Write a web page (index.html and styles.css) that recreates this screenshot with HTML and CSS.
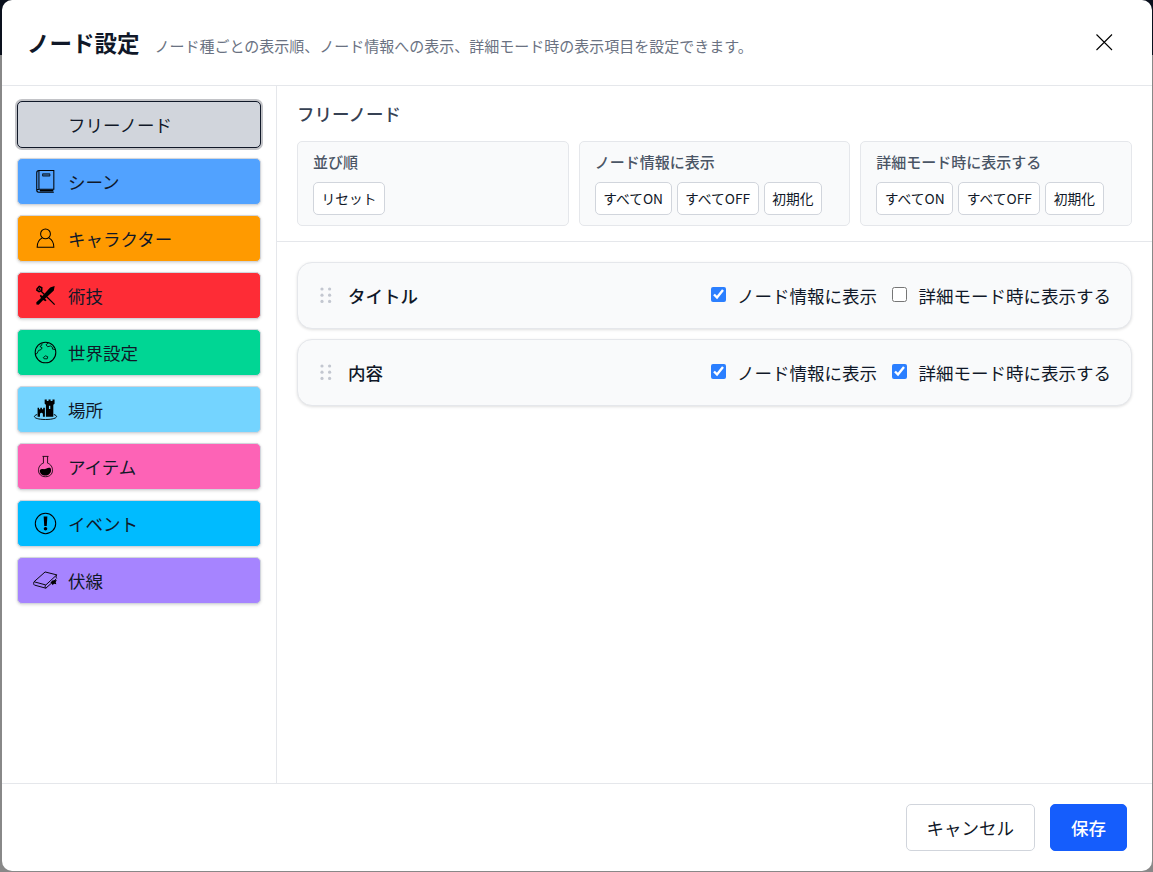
FILE: index.html
```html
<!DOCTYPE html>
<html lang="ja">

<head>
    <meta charset="UTF-8" />
    <meta name="viewport" content="width=device-width, initial-scale=1.0" />
    <title>ノード設定</title>
    <link rel="stylesheet" href="styles.css">
</head>

<body>
    <div class="modal">
        <header class="modal-header">
            <h2>ノード設定</h2>
            <p>ノード種ごとの表示順、ノード情報への表示、詳細モード時の表示項目を設定できます。</p>
            <button type="button" class="close" aria-label="閉じる">
                <svg width="18" height="18" viewBox="0 0 18 18"><path d="M1.5 1.5 17 17M17 1.5 1.5 17" /></svg>
            </button>
        </header>

        <div class="modal-body">
            <nav class="sidebar">
                <button type="button" class="node free active"><span class="icon"></span>フリーノード</button>
                <button type="button" class="node scene">
                    <svg class="icon" viewBox="0 0 24 24">
                        <path d="M5.7 1.5H20V19.5H5.7zM5.7 1.5C4.3 1.5 3.6 2.2 3.6 3.6V20.5C3.6 21.9 4.3 22.4 5.7 22.4H20M4 20C4.5 19.5 5 19.5 5.7 19.5" />
                        <path d="M9.2 4.6h7v2.2h-7z" stroke-width=".7" fill="#0006" />
                        <path d="M6.5 20.8H19.5" stroke-width="1.7" />
                    </svg>シーン
                </button>
                <button type="button" class="node character">
                    <svg class="icon" viewBox="0 0 24 24">
                        <circle cx="12" cy="7.6" r="4.7" />
                        <path d="M8.9 11.4C6 12.8 4 15.6 4 20.4H20C20 15.6 18 12.8 15.1 11.4" />
                    </svg>キャラクター
                </button>
                <button type="button" class="node skill">
                    <svg class="icon" viewBox="0 0 24 24">
                        <path class="solid" d="M20.8 2.8 20 7.2 11.5 15.2 13 16.6 11.9 17.5 9.8 16.2 5.4 20.9 3.3 20.7 3.2 18.5 7.7 14.3 6.5 12.3 7.4 11.2 9 12.5 16.5 4.4z" />
                        <path d="M7.6 7.7 20.8 20.8" stroke-width="1.2" />
                        <path d="M4 5.5 6 3.4 8.4 4.5 8.3 7.1 5.8 8.3 3.7 6.8z" stroke-width="1.5" />
                        <path d="M5.5 5.4 7 6.4" stroke-width="1.5" />
                    </svg>術技
                </button>
                <button type="button" class="node world">
                    <svg class="icon" viewBox="0 0 24 24">
                        <circle cx="12" cy="12" r="9.9" />
                        <path d="M14.9 2.7 12.5 4.5 14 6.5 16.8 5.7 19 7.3 18.5 8.6 21.2 9.2M8.7 3.2 8.3 5.2 6.6 6.2 8.8 7.5 7.6 9.3 5.4 10 3.7 13.2 2.3 13M9.8 17 12 15.2 14.2 16.1 13.6 18.1 10.7 18z" stroke-width=".8" />
                    </svg>世界設定
                </button>
                <button type="button" class="node place">
                    <svg class="icon" viewBox="0 0 24 24">
                        <path class="solid" fill-rule="evenodd" d="M11.2 2.4h2v1.4h1.7V2.4h2v1.4h1.8V2.4h2v4.1l-1.2 1V19h-7.1V7.5l-1.2-1zM15.3 8.5v3h1.3v-3zM4.4 10.3h1.4v1.4H7v-1.4h1.6v1.4h1.2v-1.4h1.6V19H9.5v-3q-1.5-2-2.8 0v3H4.4z" />
                        <path d="M4 16.8C-1.5 18.5 1.8 21.6 12 21.6S25.5 18.5 20 16.8" stroke-width=".9" />
                    </svg>場所
                </button>
                <button type="button" class="node item">
                    <svg class="icon" viewBox="0 0 24 24">
                        <path d="M9.1 2.3H14.9M10 2.4V8.8C3.5 10.8 3.2 21.8 12 21.8S20.5 10.8 14 8.8V2.4" stroke-width=".8" />
                        <path class="solid" d="M6.5 15.5C8.4 13.7 9.6 14.8 11.4 14.5 13.7 14.1 14.4 12.5 17.1 13.8 18.4 17.2 15.5 20.6 12 20.6S6.5 18.7 6.5 15.5z" />
                    </svg>アイテム
                </button>
                <button type="button" class="node event">
                    <svg class="icon" viewBox="0 0 24 24">
                        <circle cx="12" cy="12" r="9.8" />
                        <path class="solid" d="M10.2 5.2h3.6l-.6 9.2h-2.4z" />
                        <circle class="solid" cx="12" cy="17.1" r="1.7" />
                    </svg>イベント
                </button>
                <button type="button" class="node foreshadow">
                    <svg class="icon" viewBox="0 0 24 24">
                        <path d="M1 13.2 11.6 3.8 22.8 6.6 12.3 16.3zM1 13.2C.2 14.2.6 16 1.4 16.4L12.3 19.4 22.3 10.5M12.3 16.3C11.3 17 11.5 18.7 12.3 19.4M22.8 6.6C22 7.7 22.1 9.3 22.8 9.9" stroke-width=".9" />
                        <path class="solid" d="M18.5 11.9 22.8 11.5 21.8 13.6 22.4 15.5 20.3 15.2 18.6 16.6 18.2 14.8 16.7 14.2z" />
                    </svg>伏線
                </button>
            </nav>

            <main class="content">
                <section class="toolbar">
                    <h3>フリーノード</h3>
                    <div class="groups">
                        <div class="group">
                            <h4>並び順</h4>
                            <div class="actions">
                                <button type="button">リセット</button>
                            </div>
                        </div>
                        <div class="group">
                            <h4>ノード情報に表示</h4>
                            <div class="actions">
                                <button type="button">すべてON</button>
                                <button type="button">すべてOFF</button>
                                <button type="button">初期化</button>
                            </div>
                        </div>
                        <div class="group">
                            <h4>詳細モード時に表示する</h4>
                            <div class="actions">
                                <button type="button">すべてON</button>
                                <button type="button">すべてOFF</button>
                                <button type="button">初期化</button>
                            </div>
                        </div>
                    </div>
                </section>

                <ul class="fields">
                    <li>
                        <svg class="grip" width="12" height="18" viewBox="0 0 12 18">
                            <circle cx="2" cy="3" r="1.6" /><circle cx="9.6" cy="3" r="1.6" />
                            <circle cx="2" cy="9.2" r="1.6" /><circle cx="9.6" cy="9.2" r="1.6" />
                            <circle cx="2" cy="15.4" r="1.6" /><circle cx="9.6" cy="15.4" r="1.6" />
                        </svg>
                        <span class="name">タイトル</span>
                        <label><input type="checkbox" checked />ノード情報に表示</label>
                        <label><input type="checkbox" />詳細モード時に表示する</label>
                    </li>
                    <li>
                        <svg class="grip" width="12" height="18" viewBox="0 0 12 18">
                            <circle cx="2" cy="3" r="1.6" /><circle cx="9.6" cy="3" r="1.6" />
                            <circle cx="2" cy="9.2" r="1.6" /><circle cx="9.6" cy="9.2" r="1.6" />
                            <circle cx="2" cy="15.4" r="1.6" /><circle cx="9.6" cy="15.4" r="1.6" />
                        </svg>
                        <span class="name">内容</span>
                        <label><input type="checkbox" checked />ノード情報に表示</label>
                        <label><input type="checkbox" checked />詳細モード時に表示する</label>
                    </li>
                </ul>
            </main>
        </div>

        <footer class="modal-footer">
            <button type="button" class="cancel">キャンセル</button>
            <button type="button" class="save">保存</button>
        </footer>
    </div>
</body>

</html>
```
FILE: styles.css
```css
* {
    box-sizing: border-box;
}

body {
    font-family: 'Noto Sans CJK JP', sans-serif;
    font-size: 17.5px;
    color: #101828;
    background: linear-gradient(#0a101d 55px, #888 55px);
    margin: 0;
    padding: 0 1px 1px 2px;
    height: 100vh;
}

h2,
h3,
h4,
p {
    margin: 0;
}

button {
    font: inherit;
    color: inherit;
    cursor: pointer;
}

.modal {
    height: 100%;
    display: flex;
    flex-direction: column;
    background: white;
    border-radius: 10px;
    overflow: hidden;
}

.modal-header {
    height: 86px;
    display: flex;
    align-items: center;
    padding: 0 38px 0 25px;
    border-bottom: 1px solid #e5e7eb;
}

.modal-header h2 {
    font-size: 22.5px;
    font-weight: 600;
    line-height: 32px;
    margin-bottom: 2px;
}

.modal-header p {
    font-size: 15px;
    line-height: 22px;
    color: #6a7282;
    margin: 6px 0 0 15px;
}

.close {
    display: flex;
    margin: 0 1px 1px auto;
    padding: 0;
    border: none;
    background: none;
}

.close svg {
    fill: none;
    stroke: #000;
    stroke-width: 1.1;
}

.modal-body {
    flex: 1;
    min-height: 0;
    display: flex;
}

.sidebar {
    width: 275px;
    display: flex;
    flex-direction: column;
    gap: 10px;
    padding: 15px;
    border-right: 1px solid #e5e7eb;
}

.node {
    height: 47px;
    display: flex;
    align-items: center;
    gap: 10px;
    padding: 0 15px;
    border: 1px solid #d1d5dc;
    border-radius: 5px;
    box-shadow: 0 1px 3px rgba(0, 0, 0, 0.15);
}

.node.active {
    border-color: #101828;
    box-shadow: 0 0 0 2px #c2c3c7;
}

.icon {
    width: 25px;
    height: 25px;
    fill: none;
    stroke: #000;
    stroke-width: 1;
}

.icon .solid {
    fill: #000;
    stroke: none;
}

.free {
    background: #d1d5dc;
}

.scene {
    background: #51a2ff;
}

.character {
    background: #ff9a00;
}

.skill {
    background: #fe2c36;
}

.world {
    background: #00d694;
}

.place {
    background: #74d4ff;
}

.item {
    background: #fd63b6;
}

.event {
    background: #00bbff;
}

.foreshadow {
    background: #a684ff;
}

.content {
    flex: 1;
    min-width: 0;
}

.toolbar {
    height: 156px;
    padding: 15px 20px;
    border-bottom: 1px solid #e5e7eb;
}

.toolbar h3 {
    font-size: 17.5px;
    font-weight: 500;
    line-height: 26px;
    color: #364153;
    margin-bottom: 14px;
}

.groups {
    display: grid;
    grid-template-columns: repeat(3, 1fr);
    gap: 10px;
}

.group {
    height: 85px;
    padding: 10px 15px;
    background: #f9fafb;
    border: 1px solid #e5e7eb;
    border-radius: 5px;
}

.group h4 {
    font-size: 15px;
    font-weight: 500;
    line-height: 20px;
    color: #4a5565;
    margin-bottom: 10px;
}

.actions {
    display: flex;
    gap: 5px;
}

.actions button {
    height: 33px;
    padding: 0 7.5px 1px;
    font-size: 13.75px;
    white-space: nowrap;
    background: white;
    border: 1px solid #d1d5dc;
    border-radius: 5px;
}

.fields {
    list-style-type: none;
    margin: 0;
    padding: 20px;
    display: flex;
    flex-direction: column;
    gap: 10px;
}

.fields li {
    height: 67px;
    display: flex;
    align-items: center;
    padding: 0 20px;
    background: #f9fafb;
    border: 1px solid #e5e7eb;
    border-radius: 15px;
    box-shadow: 0 1px 3px rgba(0, 0, 0, 0.13);
}

.grip {
    margin: 0 16.5px 2px 1.5px;
    fill: #c3c7d0;
}

.name {
    flex: 1;
    font-weight: 500;
}

.fields label {
    display: flex;
    align-items: center;
    margin-left: 15px;
}

.fields input {
    width: 15px;
    height: 15px;
    margin: 0 11.5px 3px 0;
    accent-color: #2b7fff;
}

.modal-footer {
    height: 88px;
    display: flex;
    justify-content: flex-end;
    gap: 15px;
    padding: 20px 25px;
    border-top: 1px solid #e5e7eb;
}

.modal-footer button {
    height: 47px;
    padding: 0 20px;
    border-radius: 5px;
}

.modal-footer .cancel {
    background: white;
    border: 1px solid #d1d5dc;
}

.modal-footer .save {
    color: white;
    font-weight: 500;
    background: #155dfc;
    border: 1px solid #155dfc;
}
```
